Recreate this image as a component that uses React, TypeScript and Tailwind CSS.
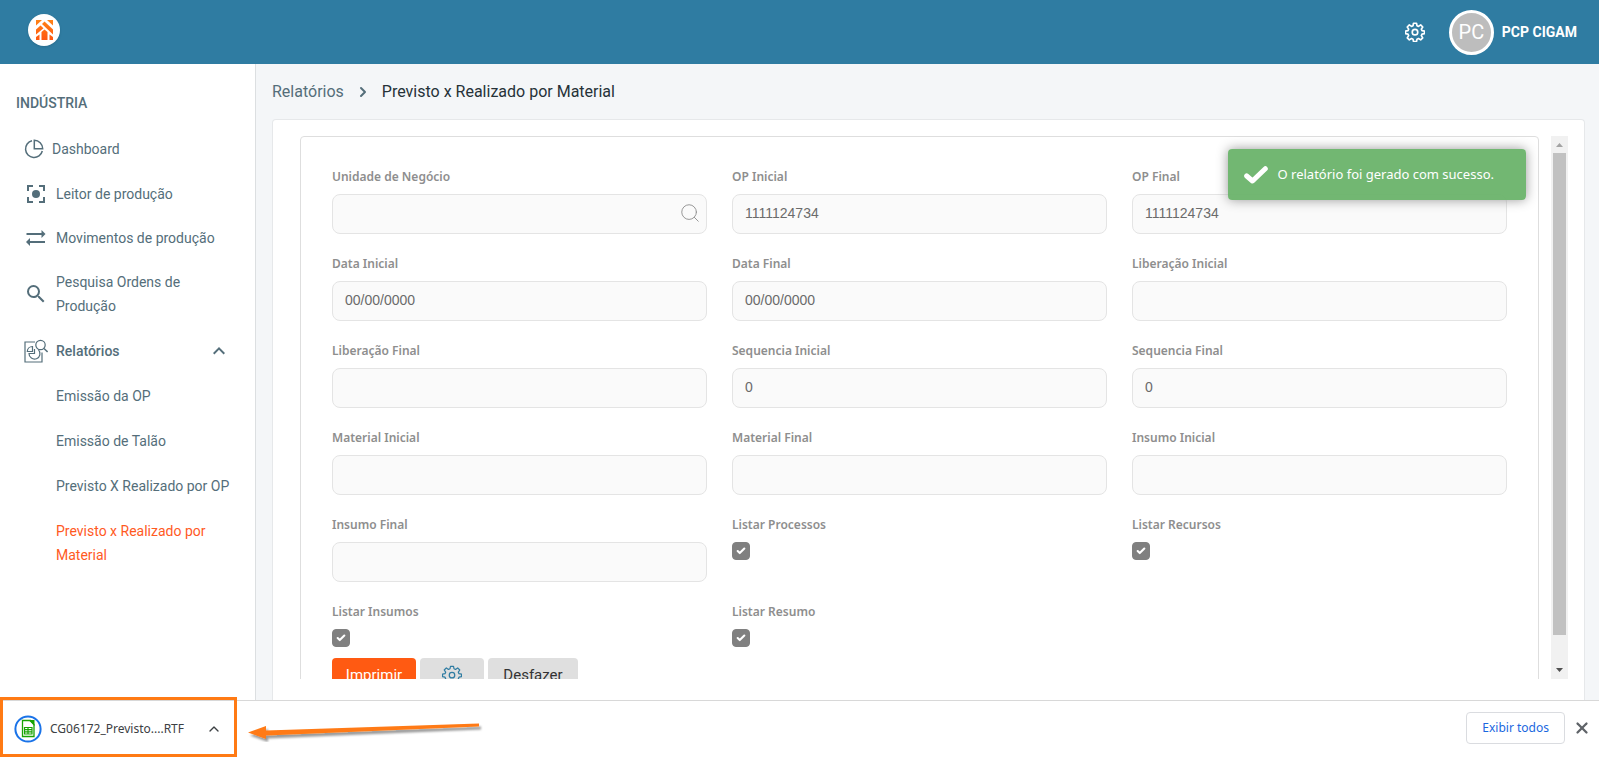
import { ReactNode, useState } from "react";
import { Check, ChevronRight, ChevronUp, Search, X } from "lucide-react";
import { MdExpandLess, MdSearch } from "react-icons/md";

interface IconProps {
  className?: string;
}

interface TextField {
  id: string;
  label: string;
  value?: string;
  search?: boolean;
}

const fields: TextField[] = [
  { id: "unidade", label: "Unidade de Negócio", search: true },
  { id: "op-inicial", label: "OP Inicial", value: "1111124734" },
  { id: "op-final", label: "OP Final", value: "1111124734" },
  { id: "data-inicial", label: "Data Inicial", value: "00/00/0000" },
  { id: "data-final", label: "Data Final", value: "00/00/0000" },
  { id: "liberacao-inicial", label: "Liberação Inicial" },
  { id: "liberacao-final", label: "Liberação Final" },
  { id: "sequencia-inicial", label: "Sequencia Inicial", value: "0" },
  { id: "sequencia-final", label: "Sequencia Final", value: "0" },
  { id: "material-inicial", label: "Material Inicial" },
  { id: "material-final", label: "Material Final" },
  { id: "insumo-inicial", label: "Insumo Inicial" },
  { id: "insumo-final", label: "Insumo Final" },
];

const options = [
  { id: "processos", label: "Listar Processos" },
  { id: "recursos", label: "Listar Recursos" },
  { id: "insumos", label: "Listar Insumos" },
  { id: "resumo", label: "Listar Resumo" },
];

const reports = [
  { label: "Emissão da OP" },
  { label: "Emissão de Talão" },
  { label: "Previsto X Realizado por OP" },
  { label: "Previsto x Realizado por Material", active: true },
];

function Logo() {
  return (
    <svg viewBox="0 0 17 20" className="w-[17px] h-5" aria-hidden="true">
      <defs>
        <linearGradient id="logo" gradientUnits="userSpaceOnUse" x1="0" y1="0" x2="0" y2="20">
          <stop offset="0" stopColor="#ff8216" />
          <stop offset="1" stopColor="#ff560f" />
        </linearGradient>
      </defs>
      <g fill="url(#logo)">
        <path d="M0 0h6L0 5.500z" />
        <path d="M11 0h6v5.500z" />
        <path d="M8.500 1.500L17 9.500V14.500L6 4z" />
        <path d="M4.500 5.500l3 2.800L0 14.500V9.500z" />
        <path d="M8.500 9.500L11.500 12v8h-6v-8z" />
        <path d="M0 17l3.500-2.500V20H0z" />
        <path d="M17 17l-3.500-2.500V20H17z" />
      </g>
    </svg>
  );
}

function GearIcon({ className }: IconProps) {
  return (
    <svg viewBox="0 0 24 24" fill="none" stroke="currentColor" strokeLinejoin="round" className={className} aria-hidden="true">
      <path d="M10.200 1.500h3.600l.6 3 1.800.8 2.600-1.800 2.500 2.500-1.700 2.600.8 1.800 3 .6v3l-3 .6-.8 1.800 1.700 2.600-2.500 2.500-2.600-1.700-1.800.8-.6 3h-3.600l-.6-3-1.800-.8-2.600 1.700-2.500-2.500 1.700-2.600-.8-1.800-3-.6v-3l3-.6.8-1.800L2.700 6l2.500-2.500 2.600 1.800 1.800-.8z" />
      <circle cx="12" cy="12.200" r="3.300" />
    </svg>
  );
}

function PieIcon() {
  return (
    <svg viewBox="0 0 20 20" fill="none" stroke="currentColor" strokeWidth="1.500" className="w-5 h-5" aria-hidden="true">
      <path d="M8 1.700a8.500 8.500 0 1 0 10.300 10.300" />
      <path d="M10.300 1.300v8.400h8.400a8.600 8.600 0 0 0-8.400-8.400z" />
    </svg>
  );
}

function ScanIcon() {
  return (
    <svg viewBox="0 0 18 18" fill="none" stroke="currentColor" strokeWidth="2" className="w-[18px] h-[18px]" aria-hidden="true">
      <path d="M1 6V1h5M12 1h5v5M17 12v5h-5M6 17H1v-5" />
      <circle cx="9" cy="9" r="4" fill="currentColor" stroke="none" />
    </svg>
  );
}

function SwapIcon() {
  return (
    <svg viewBox="0 0 20 16" className="w-5 h-4" fill="currentColor" aria-hidden="true">
      <path d="M.5 3h15V0l4 4-4 4V5H.5z" />
      <path d="M19 11H4V8l-4 4 4 4v-3h15z" />
    </svg>
  );
}

function ReportIcon() {
  return (
    <svg viewBox="0 0 24 24" fill="none" stroke="currentColor" strokeWidth="1.200" className="w-6 h-6 shrink-0" aria-hidden="true">
      <path d="M11 3H1v20h17V13.500" />
      <circle cx="16.500" cy="6" r="4.700" />
      <path d="M20 9.500l3.600 3.400" strokeWidth="1.500" />
      <path d="M8.500 7.500v5H3.300a5.200 5.200 0 0 1 5.200-5z" />
      <path d="M10.500 10v4.500H5a5.500 5.500 0 1 0 9.500-3.700" />
    </svg>
  );
}

function SheetIcon() {
  return (
    <svg viewBox="0 0 28 28" fill="none" className="w-7 h-7 shrink-0" aria-hidden="true">
      <circle cx="14" cy="14" r="12.600" stroke="#1a73e8" strokeWidth="2" />
      <path d="M8.500 5.500h8l3.500 4V21.500H8.500z" stroke="#18a303" strokeWidth="1.300" />
      <path d="M14.500 5H20.500v6z" fill="#18a303" />
      <path d="M10.500 12.500h7.500v6.500h-7.500zM10.500 14.700H18M10.500 16.900H18M14 12.500V19" stroke="#18a303" strokeWidth="1.200" />
    </svg>
  );
}

function MenuLink({ icon, children }: { icon: ReactNode; children: ReactNode }) {
  return (
    <a href="#" className="flex items-center gap-2.5 py-2.5 pl-3 pr-6">
      <span className="flex w-5 shrink-0 justify-center">{icon}</span>
      <span>{children}</span>
    </a>
  );
}

function Header() {
  return (
    <header className="flex h-16 shrink-0 items-center justify-between bg-[#2f7ca2] pl-7 pr-[22px] text-white">
      <a href="#" aria-label="Início" className="mb-1 flex size-8 items-center justify-center rounded-full bg-white shadow">
        <Logo />
      </a>
      <div className="flex items-center">
        <button type="button" aria-label="Configurações" className="mr-6">
          <GearIcon className="size-5 stroke-2" />
        </button>
        <button type="button" className="flex items-center gap-2 text-sm font-bold">
          <span className="flex size-[45px] items-center justify-center rounded-full border-3 border-white bg-[#bdbdbd] text-xl font-normal">PC</span>
          PCP CIGAM
        </button>
      </div>
    </header>
  );
}

function Sidebar() {
  const [open, setOpen] = useState(true);

  return (
    <aside className="w-64 shrink-0 overflow-hidden border-r border-[#dcdfe1] bg-white px-4 pt-[27px] text-sm leading-6 text-[#546e7a]">
      <h2 className="mb-3 font-medium">INDÚSTRIA</h2>
      <nav className="-mx-0.5">
        <a href="#" className="mb-px flex items-center gap-2 py-2.5 pl-2.5">
          <PieIcon />
          Dashboard
        </a>
        <MenuLink icon={<ScanIcon />}>Leitor de produção</MenuLink>
        <MenuLink icon={<SwapIcon />}>Movimentos de produção</MenuLink>
        <MenuLink icon={<MdSearch className="size-6 shrink-0" />}>Pesquisa Ordens de Produção</MenuLink>
        <button type="button" onClick={() => setOpen(!open)} className="flex w-full items-center gap-2 py-[11px] pl-2.5 pr-2.5 font-medium">
          <ReportIcon />
          <span className="flex-1 text-left">Relatórios</span>
          <MdExpandLess className="size-6" />
        </button>
        {open && (
          <div className="space-y-px">
            {reports.map((report) => (
              <a key={report.label} href="#" className={report.active ? "block py-2.5 pl-[42px] pr-4 text-[#ff5a1f]" : "block py-2.5 pl-[42px]"}>
                {report.label}
              </a>
            ))}
          </div>
        )}
      </nav>
    </aside>
  );
}

function Field({ field }: { field: TextField }) {
  return (
    <div>
      <label htmlFor={field.id} className="block">{field.label}</label>
      <div className="relative mt-2">
        <input
          id={field.id}
          type="text"
          defaultValue={field.value}
          className="h-10 w-full rounded-lg border border-[#e4e4e4] bg-[#fafafa] px-3 pb-0.5 font-['Liberation_Sans'] text-sm font-normal text-[#6b6b6b] outline-none"
        />
        {field.search && (
          <button type="button" aria-label="Pesquisar" className="absolute right-1.5 top-2">
            <Search className="size-[22px] stroke-1" />
          </button>
        )}
      </div>
    </div>
  );
}

function Option({ id, label }: { id: string; label: string }) {
  return (
    <div>
      <label htmlFor={id} className="block">{label}</label>
      <div className="relative mt-2 h-10">
        <input id={id} type="checkbox" defaultChecked className="peer block h-[18px] w-[18px] appearance-none rounded border border-[#808080] checked:bg-[#808080]" />
        <Check className="pointer-events-none absolute left-[4px] top-[4px] hidden size-[10px] stroke-[5] text-white peer-checked:block" />
      </div>
    </div>
  );
}

function ReportForm() {
  return (
    <form className="h-[600px] min-w-0 flex-1 rounded border border-[#dedede] px-[31px] pt-[30px]">
      <div className="grid grid-cols-3 gap-x-[25px] gap-y-5 font-['Noto_Sans'] text-xs font-semibold leading-[19px] text-[#8e8e8e]">
        {fields.map((field) => (
          <Field key={field.id} field={field} />
        ))}
        {options.map((option) => (
          <Option key={option.id} id={option.id} label={option.label} />
        ))}
      </div>
      <div className="-mt-[11px] flex gap-1 text-[15px]">
        <button type="button" className="h-[34px] w-[84px] rounded-sm bg-[#ff5a12] text-white">Imprimir</button>
        <button type="button" aria-label="Opções" className="flex h-[34px] w-16 items-center justify-center rounded-sm bg-[#dfdfdf] text-[#2f7ca2]">
          <GearIcon className="size-5 stroke-[1.5]" />
        </button>
        <button type="button" className="h-[34px] w-[90px] rounded-sm bg-[#dfdfdf] text-[#333]">Desfazer</button>
      </div>
    </form>
  );
}

function ScrollTrack() {
  return (
    <div className="flex w-[17px] shrink-0 flex-col bg-[#f1f1f1] px-0.5" aria-hidden="true">
      <svg viewBox="0 0 13 17" className="h-[17px] w-[13px]"><path d="M3 11l3.500-4L10 11z" fill="#a3a3a3" /></svg>
      <div className="flex-1 bg-[#c1c1c1]" />
      <svg viewBox="0 0 13 17" className="mt-[27px] h-[17px] w-[13px]"><path d="M3 6l3.500 4L10 6z" fill="#505050" /></svg>
    </div>
  );
}

function Toast() {
  return (
    <div role="status" className="absolute right-[58px] top-[29px] flex h-[51px] items-center gap-2.5 rounded-sm bg-[#6ab36a]/95 pl-4 pr-8 font-['Noto_Sans'] text-[13px] text-white shadow-[0_0_12px_#999]">
      <svg viewBox="0 0 24 18" fill="none" stroke="currentColor" strokeWidth="5" strokeLinecap="round" strokeLinejoin="round" className="w-6" aria-hidden="true">
        <path d="M2.700 10l5.800 5L21.300 2.700" />
      </svg>
      O relatório foi gerado com sucesso.
    </div>
  );
}

function DownloadBar() {
  return (
    <footer className="relative flex h-[57px] shrink-0 items-center justify-between border-t border-[#d8d8d8] bg-white pr-2 font-['Noto_Sans'] text-xs text-[#3c4043]">
      <div className="flex items-center">
        <div className="-mt-1 flex h-[60px] w-[237px] items-center border-3 border-[#ff7a14] pl-[11px] pr-3 pt-1">
          <SheetIcon />
          <button type="button" className="ml-2 flex-1 text-left">CG06172_Previsto....RTF</button>
          <button type="button" aria-label="Mais ações"><ChevronUp className="size-4" /></button>
        </div>
        <svg viewBox="0 0 240 26" className="ml-2.5 h-[26px] w-60" aria-hidden="true">
          <defs>
            <filter id="arrow-shadow" x="-5%" y="-30%" width="110%" height="180%">
              <feDropShadow dx="2" dy="3" stdDeviation="1.200" floodColor="#000" floodOpacity="0.4" />
            </filter>
          </defs>
          <path d="M1 16.500L19 10v4.500l213-7v3l-213 9V23z" fill="#ff7a14" filter="url(#arrow-shadow)" />
        </svg>
      </div>
      <div className="flex items-center gap-2 pb-0.5">
        <button type="button" className="h-8 rounded border border-[#dadce0] px-[15px] text-[#1a67e0]">Exibir todos</button>
        <button type="button" aria-label="Fechar"><X className="size-[18px] text-[#5f6368]" strokeWidth={3} /></button>
      </div>
    </footer>
  );
}

export default function App() {
  return (
    <div className="flex h-screen flex-col bg-[#f4f6f8] font-[Roboto,sans-serif]">
      <Header />
      <div className="flex min-h-0 flex-1">
        <Sidebar />
        <main className="flex min-w-0 flex-1 flex-col pl-4 pr-3.5">
          <nav aria-label="Trilha" className="flex h-[55px] shrink-0 items-center text-base text-[#546e7a]">
            <a href="#">Relatórios</a>
            <ChevronRight className="mx-[11px] size-4" strokeWidth={3} />
            <span className="text-[#263238]">Previsto x Realizado por Material</span>
          </nav>
          <section className="relative flex min-h-0 flex-1 rounded-t border border-b-0 border-[#e6e8ea] bg-white pb-[21px] pl-[27px] pr-4 pt-4">
            <div className="flex min-w-0 flex-1 gap-3 overflow-hidden">
              <ReportForm />
              <ScrollTrack />
            </div>
            <Toast />
          </section>
        </main>
      </div>
      <DownloadBar />
    </div>
  );
}
